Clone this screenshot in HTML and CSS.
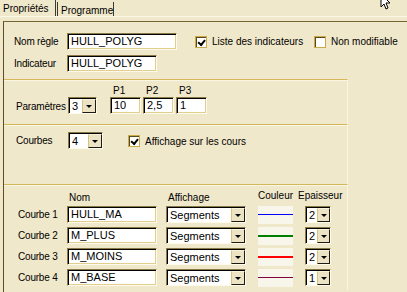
FILE: index.html
```html
<!DOCTYPE html>
<html lang="fr">
<head>
    <meta charset="UTF-8">
    <title>Propriétés</title>
    <link rel="stylesheet" href="styles.css">
</head>
<body>

    <div class="tabs">
        <div class="tab active">Propriétés</div>
        <div class="tab">Programme</div>
    </div>

    <div class="panel">
        <div class="head">
            <div class="row">
                <span class="lbl w53">Nom règle</span>
                <div class="field w110">HULL_POLYG</div>
                <span class="opt first w119"><span class="check on"></span>Liste des indicateurs</span>
                <span class="opt"><span class="check"></span>Non modifiable</span>
            </div>
            <div class="row">
                <span class="lbl w53">Indicateur</span>
                <div class="field w90">HULL_POLYG</div>
            </div>
        </div>

        <div class="group params">
            <span class="lbl w52">Paramètres</span>
            <div class="combo w29"><span class="val">3</span><span class="btn"></span></div>
            <div class="pcol first">
                <span class="ptitle">P1</span>
                <div class="field w31">10</div>
            </div>
            <div class="pcol">
                <span class="ptitle">P2</span>
                <div class="field w31">2,5</div>
            </div>
            <div class="pcol">
                <span class="ptitle">P3</span>
                <div class="field w31">1</div>
            </div>
        </div>

        <div class="group curves">
            <span class="lbl w52">Courbes</span>
            <div class="combo w35"><span class="val">4</span><span class="btn"></span></div>
            <span class="opt aff"><span class="check on"></span>Affichage sur les cours</span>
        </div>

        <div class="group table">
            <div class="thead">
                <span class="th c-nom">Nom</span>
                <span class="th c-aff">Affichage</span>
                <span class="th c-col up">Couleur</span>
                <span class="th up">Epaisseur</span>
            </div>

            <div class="trow">
                <span class="lbl w49">Courbe 1</span>
                <div class="field w90">HULL_MA</div>
                <div class="combo w80 gap9"><span class="val">Segments</span><span class="btn"></span></div>
                <div class="swatch"><span class="line blue"></span></div>
                <div class="combo w26 gap12"><span class="val">2</span><span class="btn"></span></div>
            </div>
            <div class="trow">
                <span class="lbl w49">Courbe 2</span>
                <div class="field w90">M_PLUS</div>
                <div class="combo w80 gap9"><span class="val">Segments</span><span class="btn"></span></div>
                <div class="swatch"><span class="line green"></span></div>
                <div class="combo w26 gap12"><span class="val">2</span><span class="btn"></span></div>
            </div>
            <div class="trow">
                <span class="lbl w49">Courbe 3</span>
                <div class="field w90">M_MOINS</div>
                <div class="combo w80 gap9"><span class="val">Segments</span><span class="btn"></span></div>
                <div class="swatch"><span class="line red"></span></div>
                <div class="combo w26 gap12"><span class="val">2</span><span class="btn"></span></div>
            </div>
            <div class="trow">
                <span class="lbl w49">Courbe 4</span>
                <div class="field w90">M_BASE</div>
                <div class="combo w80 gap9"><span class="val">Segments</span><span class="btn"></span></div>
                <div class="swatch"><span class="line purple"></span></div>
                <div class="combo w26 gap12"><span class="val">1</span><span class="btn"></span></div>
            </div>
        </div>
    </div>

    <svg class="cursor" width="14" height="12" viewBox="0 0 14 12">
        <path d="M1 -6 L1 7 L4 4 L6 9 L8 8 L6 3 L10 3 Z" fill="#fff" stroke="#000" stroke-width="1"/>
    </svg>

</body>
</html>
```

FILE: styles.css
```css
* { box-sizing: border-box; }
body { margin: 0; width: 407px; height: 292px; overflow: hidden; position: relative; background-color: #f0e8cb; font-family: "Liberation Sans", Arial, sans-serif; font-size: 10px; color: #000; }

.tabs { display: flex; height: 17px; border-bottom: 1px solid #fbf7e6; }
.tab { padding: 2px 0 0 3px; line-height: 13px; border-right: 1px solid #3c3a30; white-space: nowrap; }
.tab.active { width: 56px; }
.tab + .tab { margin-top: 2px; border-left: 1px solid #3c3a30; margin-left: 1px; width: 57px; }

.panel { margin: 4px 0 0 3px; height: 271px; border-top: 1px solid #766634; border-left: 1px solid #5e4e22; }

.head { padding: 11px 0 7px 10px; }
.row { display: flex; align-items: center; height: 17px; }
.row + .row { margin-top: 5px; }

.lbl { flex: none; white-space: nowrap; letter-spacing: -0.2px; }
.w49 { width: 49px; }
.w52 { width: 52px; }
.w53 { width: 53px; }

.field { flex: none; height: 17px; padding: 0 3px; font-size: 11px; line-height: 15px; background: #fff; border: 1px solid; border-color: #8a7a4a #fffaea #fffaea #8a7a4a; box-shadow: inset 1px 1px 0 #000, inset -1px -1px 0 #e2cf8e; white-space: nowrap; overflow: hidden; }
.w26 { width: 26px; }
.w29 { width: 29px; }
.w31 { width: 31px; }
.w35 { width: 35px; }
.w80 { width: 80px; }
.w90 { width: 90px; }
.w110 { width: 110px; }
.w119 { width: 119px; }

.opt { display: flex; align-items: center; white-space: nowrap; }
.opt.first { margin-left: 18px; }
.check { flex: none; width: 12px; height: 12px; margin-right: 5px; background: #fff; border: 1px solid #caa948; box-shadow: inset 1px 1px 0 #5a4a20; position: relative; }
.check.on::after { content: ""; position: absolute; left: 2px; top: 1px; width: 5px; height: 3px; border-left: 2px solid #000; border-bottom: 2px solid #000; transform: rotate(-50deg) translate(-1px, 1px); }

.combo { flex: none; display: flex; height: 17px; font-size: 11px; background: #fff; border: 1px solid; border-color: #8a7a4a #fffaea #fffaea #8a7a4a; box-shadow: inset 1px 1px 0 #000; padding: 1px 0 0 1px; }
.combo .val { flex: 1; padding-left: 2px; line-height: 14px; white-space: nowrap; overflow: hidden; }
.combo .btn { flex: none; width: 14px; background: #ece3c4; border-top: 1px solid #f9f3dc; border-left: 1px solid #d9c37a; border-right: 1px solid #1c1a14; border-bottom: 1px solid #1c1a14; position: relative; }
.combo .btn::after { content: ""; position: absolute; left: 3px; top: 5px; border-left: 3px solid transparent; border-right: 3px solid transparent; border-top: 3px solid #000; }
.w26 .btn { width: 13px; }
.gap9 { margin-left: 9px; }
.gap12 { margin-left: 12px; }

.group { width: 344px; border-top: 1px solid #d4b75a; border-right: 1px solid #fbf6e2; box-shadow: inset 0 1px 0 #fbf6e2; padding-left: 12px; }

.params { display: flex; align-items: flex-end; height: 45px; padding-top: 4px; padding-bottom: 10px; }
.params .lbl { line-height: 15px; }
.pcol { display: flex; flex-direction: column; margin-left: 2px; }
.pcol.first { margin-left: 13px; }
.ptitle { line-height: 13px; padding-left: 3px; }

.curves { display: flex; align-items: flex-start; height: 60px; padding-top: 7px; }
.curves .lbl { line-height: 17px; }
.opt.aff { margin-left: 25px; margin-top: 3px; }

.table { height: 106px; padding-top: 5px; padding-left: 14px; }
.thead { display: flex; align-items: flex-start; height: 16px; padding-left: 49px; }
.th { white-space: nowrap; line-height: 13px; padding-top: 1px; }
.th.up { padding-top: 0; margin-top: -1px; }
.c-nom { width: 99px; padding-left: 2px; }
.c-aff { width: 92px; padding-left: 2px; }
.c-col { width: 40px; }
.trow { display: flex; align-items: center; height: 17px; margin-bottom: 4px; }
.trow .lbl { line-height: 17px; }

.swatch { flex: none; width: 35px; height: 18px; margin-left: 12px; background: #f8f6ea; display: flex; align-items: center; }
.line { display: block; width: 100%; height: 1px; }
.line.blue { background: #0000ff; }
.line.green { background: #008000; height: 2px; }
.line.red { background: #ff0000; height: 2px; }
.line.purple { background: #800040; }

.cursor { position: absolute; left: 380px; top: 0; }
```
